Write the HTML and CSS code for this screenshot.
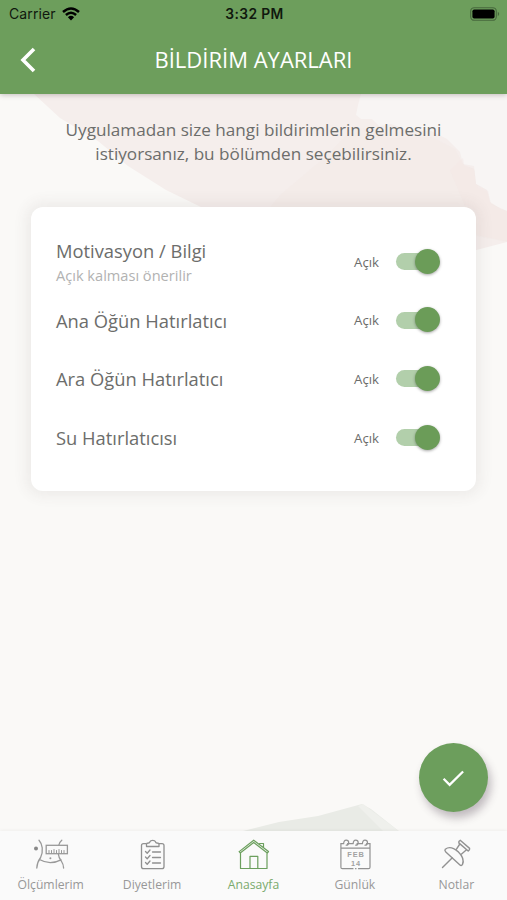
FILE: index.html
```html
<!DOCTYPE html>
<html lang="tr">
<head>
<meta charset="utf-8">
<title>Bildirim Ayarları</title>
<link rel="stylesheet" href="styles.css">
</head>
<body>
<div class="screen">
  <header class="header">
    <div class="status">
      <div class="carrier"><span>Carrier</span>
        <svg width="18" height="14" viewBox="0 0 18 14" fill="none" stroke="#000" stroke-width="2.5"><path d="M1 5Q9-2 17 5M3.9 8Q9 3.5 14.1 8"/><path d="M9 13.4L5.9 10.2Q9 7.5 12.1 10.2Z" fill="#000" stroke="none"/></svg>
      </div>
      <div class="clock">3:32 PM</div>
      <svg class="battery" width="30" height="14" viewBox="0 0 30 14"><rect x=".7" y=".7" width="25.6" height="12.6" rx="3.6" fill="none" stroke="#47683d" stroke-width="1.1"/><rect x="2.4" y="2.4" width="22.2" height="9.2" rx="1.8"/><path d="M27.8 4.8Q30.6 7 27.8 9.2Z" fill="#47683d"/></svg>
    </div>
    <div class="titlebar">
      <svg class="back" width="16" height="26" viewBox="0 0 16 26" fill="none" stroke="#fff" stroke-width="3.6"><path d="M14 2L3 13L14 24"/></svg>
      <h1>BİLDİRİM AYARLARI</h1>
    </div>
  </header>
  <main class="content">
    <svg class="backdrop" width="507" height="738" viewBox="0 94 507 738">
      <path fill="#f5eeec" d="M34 94L60 118L98 141L128 166L166 190L203 208L250 231L400 270L507 242V94Z"/>
      <path fill="#f3e9e7" d="M270 207L281 194L325 157L355 126L390 138L432 137L455 149L464 166L475 169L478 188L490 193L501 207L507 210V242L476 236L430 210Z" opacity=".4"/>
      <path fill="#f8f5f4" d="M361 94L358 105L356 115L361 119L372 119L379 126L391 124L407 130L431 131L447 139L460 152L463 164L474 166L476 184L487 190L490 202L501 209L507 211V94Z"/>
      <path fill="#f3e8e6" d="M463 158L464 165L474 169L476 184L488 191L491 204L507 211V241L477 235L450 170Z" opacity=".5"/>
      <path fill="#e9ebe6" d="M239 832L279 822L318 816L362 804L371 809L400 832Z"/>
      <path fill="#eff0ec" d="M358 806L363 804L400 832H384Z"/>
    </svg>
    <p class="intro">Uygulamadan size hangi bildirimlerin gelmesini<br>istiyorsanız, bu bölümden seçebilirsiniz.</p>
    <section class="card">
      <div class="row"><div class="label"><span class="name">Motivasyon / Bilgi</span><small>Açık kalması önerilir</small></div><span class="state">Açık</span><span class="switch"><i></i></span></div>
      <div class="row"><div class="label"><span class="name">Ana Öğün Hatırlatıcı</span></div><span class="state">Açık</span><span class="switch"><i></i></span></div>
      <div class="row"><div class="label"><span class="name">Ara Öğün Hatırlatıcı</span></div><span class="state">Açık</span><span class="switch"><i></i></span></div>
      <div class="row"><div class="label"><span class="name">Su Hatırlatıcısı</span></div><span class="state">Açık</span><span class="switch"><i></i></span></div>
    </section>
    <button class="fab" aria-label="Kaydet"><svg width="24" height="20" viewBox="0 0 24 20" fill="none" stroke="#fff" stroke-width="2.3"><path d="M1.6 10.8L7.6 16.8L21.1 3.5"/></svg></button>
  </main>
  <nav class="tabs">
    <a class="tab"><svg width="36" height="32" viewBox="1 0 36 32" fill="none" stroke="#999" stroke-width="1.3" stroke-linecap="round"><circle cx="4" cy="9.6" r="2" fill="#888" stroke="none"/><path d="M7 1.2C10.5 5 11.6 12 8.6 18.5Q5 23.5 4.8 29M29.8 1.2Q27.4 3 26.9 6M26.4 15.2Q26.6 18.5 29.3 22Q31.6 25.5 31.6 29M8 20.8Q18 26.5 29 20.8"/><rect x="14.2" y="6.3" width="21.2" height="8.4"/><path d="M17 14V11.5M19.5 14V11.5M22 14V10.5M24.5 14V11.5M27 14V10.5M29.5 14V11.5M32 14V11.5" stroke-width="1"/><circle cx="18.4" cy="19.2" r="1" fill="#999" stroke="none"/></svg><span>Ölçümlerim</span></a>
    <a class="tab"><svg width="36" height="32" viewBox="0 0 36 32" fill="none" stroke="#909090" stroke-width="1.3" stroke-linecap="round" stroke-linejoin="round"><path d="M12 4.6H9.5Q7.5 4.6 7.5 6.6V27.5Q7.5 29.7 9.7 29.7H27.8Q30 29.7 30 27.5V6.6Q30 4.6 28 4.6H25"/><path d="M12.5 7.5V5.1Q12.5 4 14.5 4Q15.7 4 15.9 2.8Q16.5 1.3 18.7 1.3Q20.9 1.3 21.5 2.8Q21.7 4 22.9 4Q25 4 25 5.1V7.5Z"/><path d="M11.5 12.5L13.2 14.2L16 11M11.5 18L13.2 19.7L16 16.5M11.5 23.5L13.2 25.2L16 22M18.5 13H26.5M18.5 18.5H26.5M18.5 24H26.5"/></svg><span>Diyetlerim</span></a>
    <a class="tab active"><svg width="36" height="32" viewBox="0 0 36 32" fill="none" stroke="#6b9f5d" stroke-width="1.2" stroke-linejoin="round" stroke-linecap="round"><path d="M5.5 14V29.5H32V14M4.2 12.6L18.7 1.2L33.5 12.6M4.2 12.6L5.2 14L18.7 3.6L32.3 14L33.5 12.6M24.5 5.3V4.5H28.5V8.5M15 29.5V17.3H22.8V29.5"/></svg><span>Anasayfa</span></a>
    <a class="tab"><svg width="36" height="32" viewBox="0 0 36 32" fill="none" stroke="#929292" stroke-width="1.2" stroke-linecap="round"><path d="M16 29.7H5.4Q3.9 29.7 3.9 28.2V4.7H6.7M10.5 4.7H16.2M20 4.7H25.5M29.5 4.7H33V28.2Q33 29.7 31.5 29.7H21.5M18.5 29.7H19M3.9 9.2H33M6.7 4.5Q6.7 1.2 9.2 1.2Q11.7 1.2 11.7 3.7Q11.7 6.2 9.2 6.2M16.2 4.5Q16.2 1.2 18.7 1.2Q21.2 1.2 21.2 3.7Q21.2 6.2 18.7 6.2M25.5 4.5Q25.5 1.2 28 1.2Q30.5 1.2 30.5 3.7Q30.5 6.2 28 6.2"/><text class="date" x="19.1" y="17.8">FEB</text><text class="date" x="19.1" y="27.2">14</text></svg><span>Günlük</span></a>
    <a class="tab"><svg width="36" height="32" viewBox="0 0 36 32" fill="none" stroke="#929292" stroke-width="1.4" stroke-linecap="round" stroke-linejoin="round"><path d="M4.5 28.5L14.3 18.8M22.2 1.3L31.6 9.4Q32 11.3 30.2 12L20.8 3.9Q20.4 2 22.2 1.3ZM21.8 5L18 10.8M28.5 10.8L23.3 15.2M7.3 10.2C10.5 7.7 15.5 8.7 20 12.6C24.5 17 26.2 22 24.4 25.7Q23.3 27.2 21.7 25.7L7.8 12.9Q6.3 11.5 7.3 10.2Z"/></svg><span>Notlar</span></a>
  </nav>
</div>
</body>
</html>
```
FILE: styles.css
```css
* { box-sizing: border-box; }
body { margin: 0; font-family: "Open Sans", "Noto Sans", sans-serif; color: #6c6d6b; }
.screen { width: 507px; height: 900px; display: flex; flex-direction: column; overflow: hidden; background: #faf9f7; }
.header { height: 94px; flex: none; background: #6d9e5c; position: relative; z-index: 2; box-shadow: 0 1px 5px rgba(70, 55, 55, .3); }
.status { height: 27px; display: grid; grid-template-columns: 1fr auto 1fr; align-items: center; padding: 0 7px 0 9px; font-family: Inter, sans-serif; color: #10180e; font-size: 14px; }
.carrier { display: flex; align-items: center; gap: 6px; letter-spacing: .1px; }
.clock { font-weight: 600; font-size: 13.8px; letter-spacing: .4px; }
.battery { justify-self: end; }
.titlebar { height: 66px; display: grid; grid-template-columns: 40px 1fr 40px; align-items: center; padding: 0 20px; }
h1 { margin: 0 0 2px; text-align: center; color: #fff; font-size: 22px; font-weight: 400; line-height: 30px; white-space: nowrap; }
.content { flex: 1; position: relative; padding: 24px 31px 0; }
.backdrop { position: absolute; left: 0; top: 0; }
.intro { position: relative; margin: 0 0 42px; text-align: center; font-size: 17.15px; line-height: 23.5px; white-space: nowrap; }
.card { position: relative; width: 445px; height: 284px; padding: 25px 36px 0 25px; background: #fff; border-radius: 12px; box-shadow: 0 0 14px 5px rgba(80, 70, 65, .075); }
.row { height: 58.6px; display: flex; align-items: center; }
.label { flex: 1; display: flex; flex-direction: column; padding-top: 2px; }
.name { font-size: 18.35px; line-height: 26px; }
small { font-size: 14.6px; line-height: 23px; color: #b2b2b2; }
.state { font-size: 13.2px; margin-right: 16px; padding-top: 1px; }
.switch { width: 45px; height: 26px; display: flex; align-items: center; justify-content: flex-end; position: relative; }
.switch::before { content: ""; position: absolute; left: 1px; top: 5px; width: 38px; height: 17px; border-radius: 9px; background: #b2cfab; }
.switch i { position: relative; width: 25px; height: 25px; border-radius: 50%; background: #6b9c58; box-shadow: 0 1px 3px rgba(0, 0, 0, .35); }
.fab { position: absolute; right: 19px; bottom: 19px; width: 69px; height: 69px; padding: 0; border: 0; border-radius: 50%; background: #6c9e5c; display: flex; align-items: center; justify-content: center; box-shadow: 3px 6px 9px rgba(70, 55, 70, .32); }
.tabs { height: 69px; flex: none; position: relative; z-index: 1; background: #fafafa; box-shadow: 0 -1px 3px rgba(0, 0, 0, .045); display: grid; grid-template-columns: repeat(5, 1fr); padding-top: 8px; }
.tab { display: flex; flex-direction: column; align-items: center; gap: 5px; font-size: 12.2px; line-height: 18px; color: #989898; }
.tab svg { display: block; }
.active { color: #7aaa6d; }
.date { font: 700 7.4px "Liberation Sans", sans-serif; letter-spacing: .9px; text-anchor: middle; fill: #a2a2a2; stroke: none; }
```
